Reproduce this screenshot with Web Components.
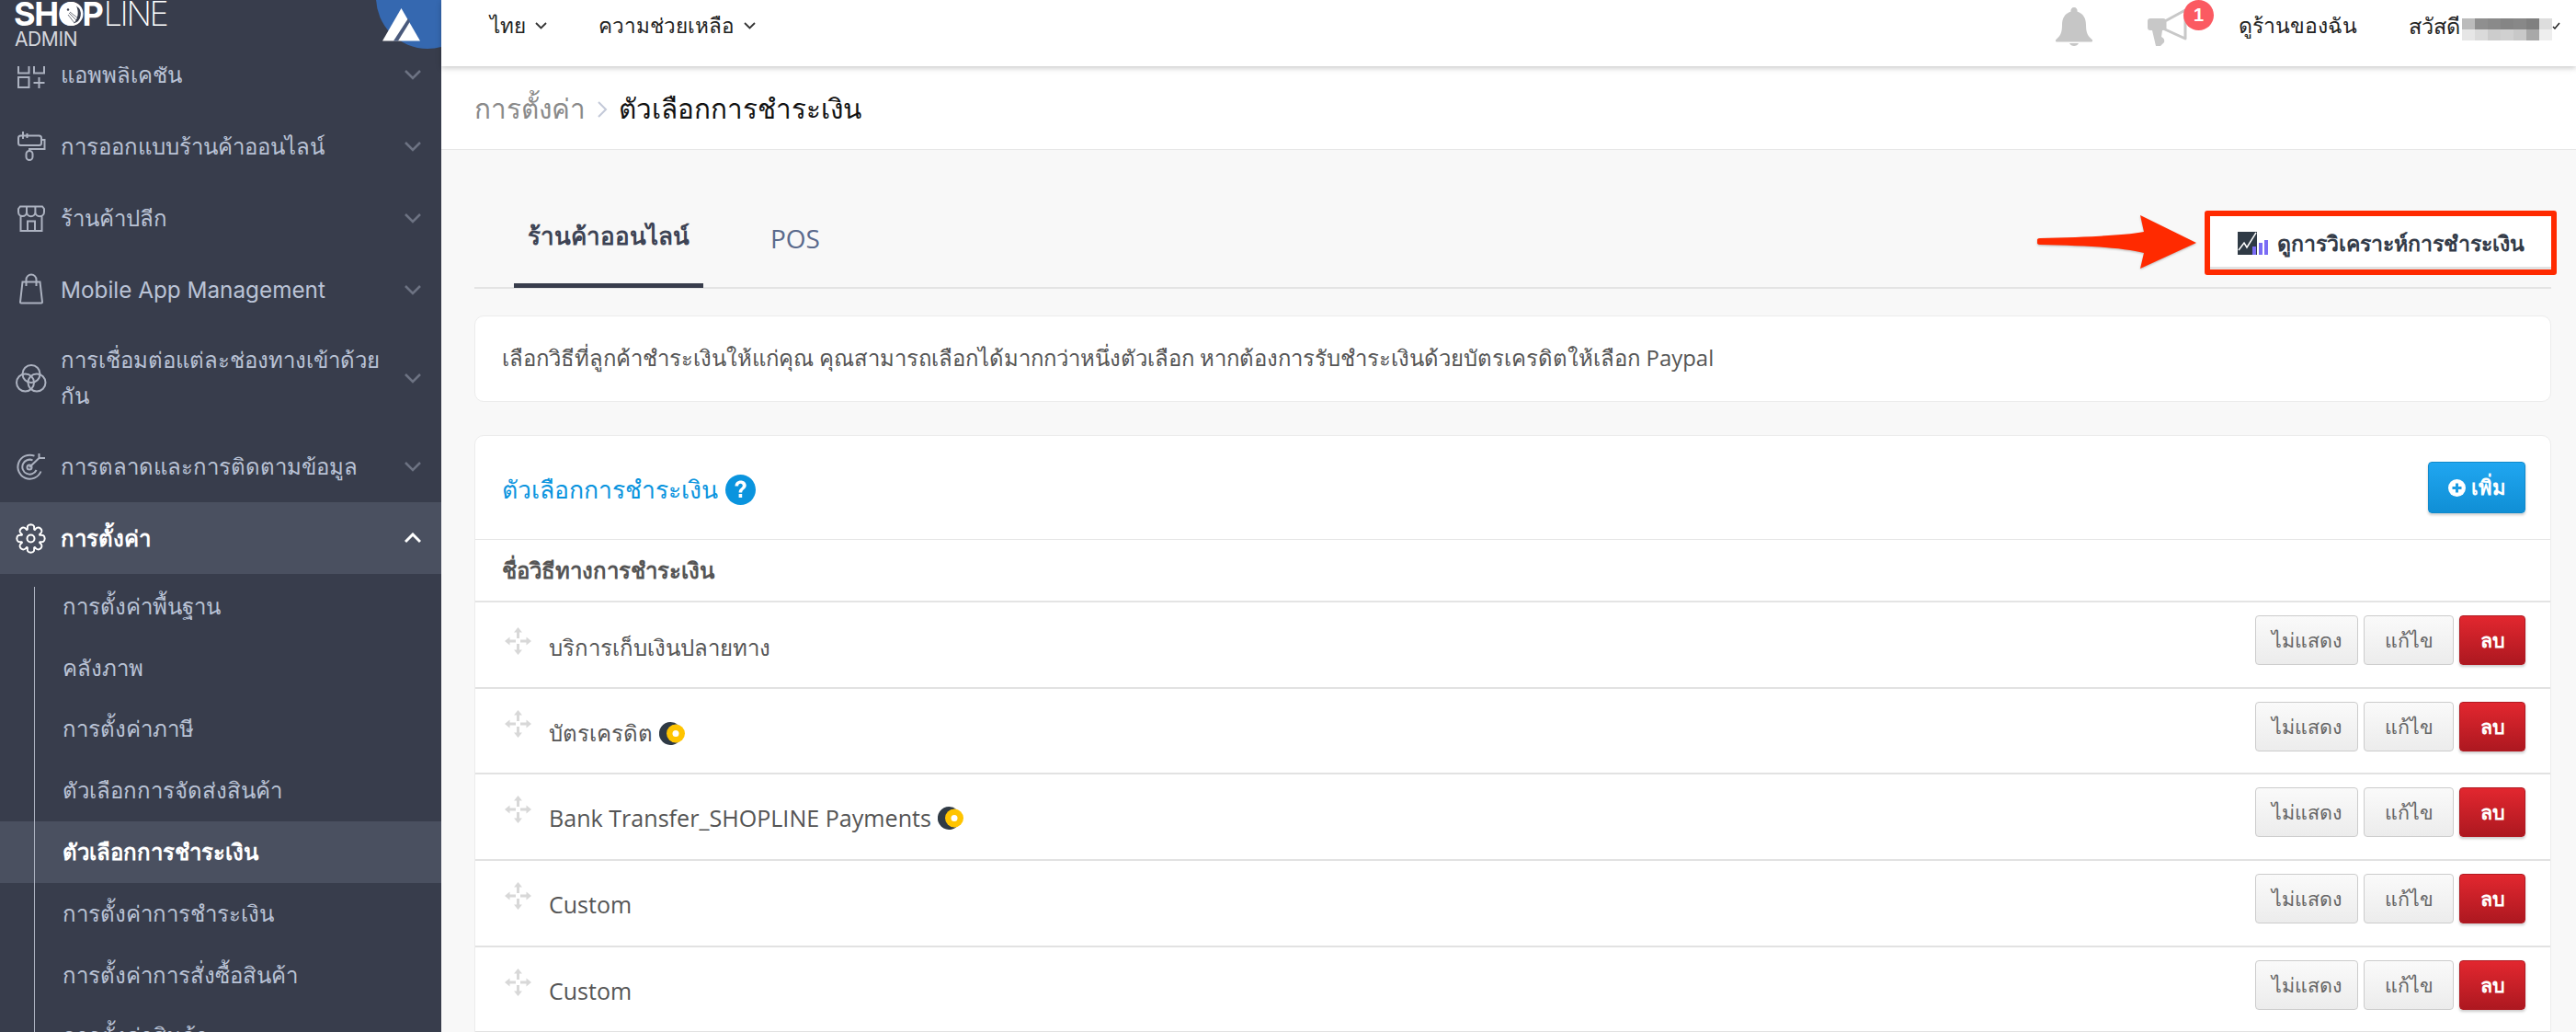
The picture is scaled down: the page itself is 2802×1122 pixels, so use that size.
<!DOCTYPE html>
<html lang="th">
<head>
<meta charset="utf-8">
<title>ตัวเลือกการชำระเงิน</title>
<style>
  html, body { margin: 0; padding: 0; height: 100%; overflow: hidden; background: #f8f8f8; }
  body { font-family: "Open Sans", "Noto Sans", sans-serif; }
</style>
</head>
<body>
<admin-app>
  <side-bar slot="side">
    <side-item icon="apps">แอพพลิเคชัน</side-item>
    <side-item icon="roller">การออกแบบร้านค้าออนไลน์</side-item>
    <side-item icon="store">ร้านค้าปลีก</side-item>
    <side-item icon="bag" style="font-size:24.300px">Mobile App Management</side-item>
    <side-item icon="rings" tall>การเชื่อมต่อแต่ละช่องทางเข้าด้วย<br>กัน</side-item>
    <side-item icon="target">การตลาดและการติดตามข้อมูล</side-item>
    <side-item icon="gear" open>การตั้งค่า</side-item>
    <side-sub>
      <sub-item>การตั้งค่าพื้นฐาน</sub-item>
      <sub-item>คลังภาพ</sub-item>
      <sub-item>การตั้งค่าภาษี</sub-item>
      <sub-item>ตัวเลือกการจัดส่งสินค้า</sub-item>
      <sub-item active>ตัวเลือกการชำระเงิน</sub-item>
      <sub-item>การตั้งค่าการชำระเงิน</sub-item>
      <sub-item>การตั้งค่าการสั่งซื้อสินค้า</sub-item>
      <sub-item>การตั้งค่าสินค้า</sub-item>
    </side-sub>
  </side-bar>
  <top-bar slot="top"></top-bar>
  <bread-crumb slot="top"></bread-crumb>
  <tab-bar></tab-bar>
  <info-card>เลือกวิธีที่ลูกค้าชำระเงินให้แก่คุณ คุณสามารถเลือกได้มากกว่าหนึ่งตัวเลือก หากต้องการรับชำระเงินด้วยบัตรเครดิตให้เลือก Paypal</info-card>
  <pay-card>
    <pay-row>บริการเก็บเงินปลายทาง</pay-row>
    <pay-row coin>บัตรเครดิต</pay-row>
    <pay-row coin latin style="font-size:25.100px">Bank Transfer_SHOPLINE Payments</pay-row>
    <pay-row latin style="font-size:25px">Custom</pay-row>
    <pay-row latin style="font-size:25px">Custom</pay-row>
  </pay-card>
</admin-app>

<script>
const THAI = '"Open Sans", "Noto Sans", sans-serif';

class AdminApp extends HTMLElement {
  constructor() {
    super();
    this.attachShadow({mode:'open'}).innerHTML = `
      <style>
        :host{ display:grid; grid-template-columns:480px 1fr; width:2802px; height:1122px; overflow:hidden; }
        .main{ display:flex; flex-direction:column; min-width:0; background:#f8f8f8; }
        .body{ padding:0 27px 0 36px; display:flex; flex-direction:column; }
      </style>
      <slot name="side"></slot>
      <div class="main">
        <slot name="top"></slot>
        <div class="body"><slot></slot></div>
      </div>`;
  }
}

class SideBar extends HTMLElement {
  constructor() {
    super();
    this.attachShadow({mode:'open'}).innerHTML = `
      <style>
        :host{ display:flex; flex-direction:column; height:1122px; overflow:hidden; background:#383d4c;
               font-family:Inter, "Noto Sans", sans-serif; position:relative; }
        .logo{ height:72px; flex:none; position:relative; overflow:hidden; background:#383d4c; z-index:1; }
        .name{ position:absolute; left:15px; top:1px; font:700 36px/28px Inter, sans-serif; color:#fff; letter-spacing:-1.200px; white-space:nowrap; }
        .name b{ font-weight:200; letter-spacing:-2.400px; margin-left:1px; }
        .bird{ position:absolute; left:0; top:0; }
        .admin{ position:absolute; left:16px; top:31px; font:400 21px/24px Inter, sans-serif; color:#d5d7dd; letter-spacing:-.4px; }
        .corner{ position:absolute; right:0; top:0; }
        .nav{ flex:1; overflow:hidden; }
        .scroll{ margin-top:-30px; display:block; }
      </style>
      <div class="logo">
        <div class="name">SHOP<b>LINE</b></div>
        <svg class="bird" width="120" height="32" viewBox="0 0 120 32">
          <circle cx="77.500" cy="15" r="13" fill="#fff"/>
          <path d="M83 6.500A10.500 10.500 0 0 1 80 25.500C85 21 86 12 83 6.500z" fill="#383d4c"/>
          <circle cx="74" cy="10.500" r="1.200" fill="#383d4c"/>
          <path d="M75 14l9 9M74 16l7 9M76 13l9 7" stroke="#383d4c" stroke-width=".7"/>
        </svg>
        <div class="admin">ADMIN</div>
        <svg class="corner" width="72" height="54" viewBox="0 0 72 54">
          <circle cx="57" cy="-3" r="56" fill="#3568b0"/>
          <path d="M8 44.500L28.500 9 49 44.500z" fill="#fff"/>
          <path d="M20 44.500L36 20l2 3.500-13 21z" fill="#4a5a7c"/>
        </svg>
      </div>
      <div class="nav"><div class="scroll"><slot></slot></div></div>`;
  }
}

// rounded eight-tooth gear around (33.5, 15.5)
function gearPath() {
  let d = '';
  const pt = (r, a) => (33.5 + r * Math.cos(a)).toFixed(2) + ' ' + (15.5 + r * Math.sin(a)).toFixed(2);
  for (let i = 0; i < 8; i++) {
    const a = i * Math.PI / 4 - Math.PI / 2;
    const s = Math.PI / 8;
    d += (i ? 'L' : 'M') + pt(10.5, a - s * .9);
    d += 'C' + pt(13, a - s * .75) + ' ' + pt(15.5, a - s * .7) + ' ' + pt(15.2, a);
    d += 'C' + pt(15.5, a + s * .7) + ' ' + pt(13, a + s * .75) + ' ' + pt(10.5, a + s * .9);
  }
  return d + 'Z';
}

const SIDE_ICONS = {
  apps: '<path d="M20 2v11.500h11.500V2M37 2v11.500h11V2M20 18h11.500v11H20zM42.500 18v12M36.500 24h12"/>',
  roller: '<rect x="20" y="3.500" width="25" height="10.500" rx="2.500"/><path d="M25-1V7M29.500 1V6M45 8h3.500v10H32v2"/><rect x="28.500" y="20" width="7" height="10" rx="3.500"/>',
  store: '<path d="M22 2.500H46L48 5V8.500A4.800 4.800 0 0 1 38.400 8.500A4.700 4.700 0 0 1 29 8.500A4.500 4.500 0 0 1 20 8.500V5zM29 2.500V8.500M38.400 2.500V8.500M22.500 13v16h23V13M30 29V18.500h8V29"/>',
  bag: '<path d="M24.500 6.500h19l2.500 22a1 1 0 0 1-1 1H23a1 1 0 0 1-1-1zM28.500 11V4a5.500 5.500 0 0 1 11 0v7"/>',
  rings: '<circle cx="34" cy="10.500" r="9.500"/><circle cx="27.500" cy="20" r="9.500"/><circle cx="40" cy="20" r="9.500"/>',
  target: '<path d="M37.500 3.700A13 13 0 1 0 44.500 20.500M35.500 8.300A8 8 0 1 0 39.600 19M32 16L42.500 6M42.500 1V6H49"/><circle cx="32" cy="16" r="2.500"/>',
  gear: '<path d="' + gearPath() + '" stroke-linejoin="round"/><circle cx="33.500" cy="15.500" r="4"/>'
};

class SideItem extends HTMLElement {
  constructor() {
    super();
    this.attachShadow({mode:'open'}).innerHTML = `
      <style>
        :host{ display:flex; align-items:center; min-height:78px; position:relative; color:#bac3d6; font-size:24px; line-height:39px; }
        :host([tall]){ padding:18px 0; }
        :host([open]){ background:#4a5060; color:#fff; font-weight:700; }
        .ico{ position:absolute; left:0; top:50%; margin-top:-15px; fill:none; stroke:#acb2c0; stroke-width:2; overflow:visible; }
        :host([open]) .ico{ stroke:#fff; }
        .txt{ margin-left:66px; width:370px; }
        .chev{ position:absolute; left:440px; top:50%; margin-top:-6px; fill:none; stroke:#6d7383; stroke-width:2.500; }
        :host([open]) .chev{ stroke:#fff; stroke-width:3; }
      </style>
      <svg class="ico" width="68" height="32" viewBox="0 0 68 32"></svg>
      <div class="txt"><slot></slot></div>
      <svg class="chev" width="18" height="12" viewBox="0 0 18 12"><path d=""/></svg>`;
  }
  connectedCallback() {
    this.shadowRoot.querySelector('.ico').innerHTML = SIDE_ICONS[this.getAttribute('icon')] || '';
    this.shadowRoot.querySelector('.chev path').setAttribute('d', this.hasAttribute('open') ? 'M1 10l8-8 8 8' : 'M1 2l8 8 8-8');
  }
}

class SideSub extends HTMLElement {
  constructor() {
    super();
    this.attachShadow({mode:'open'}).innerHTML = `
      <style>
        :host{ display:block; position:relative; padding-top:2px; }
        .rail{ position:absolute; left:37px; top:14px; bottom:0; width:1px; background:#aeb4c2; z-index:1; }
      </style>
      <div class="rail"></div><slot></slot>`;
  }
}

class SubItem extends HTMLElement {
  constructor() {
    super();
    this.attachShadow({mode:'open'}).innerHTML = `
      <style>
        :host{ display:flex; align-items:center; height:66.800px; padding-left:68px; color:#bac3d6; font-size:24px; }
        :host([active]){ background:#4a5060; color:#fff; font-weight:700; }
      </style>
      <slot></slot>`;
  }
}

class TopBar extends HTMLElement {
  constructor() {
    super();
    this.attachShadow({mode:'open'}).innerHTML = `
      <style>
        :host{ display:flex; align-items:center; height:72px; box-sizing:border-box; padding-bottom:16px; background:#fff; position:relative; z-index:2;
               box-shadow:0 2px 6px rgba(0,0,0,.22); font-family:${THAI}; font-size:22.500px; color:#222; }
        .lang{ display:flex; align-items:center; gap:10px; margin-left:53px; }
        .help{ display:flex; align-items:center; gap:10px; margin-left:56px; }
        .chev{ fill:none; stroke:#333; stroke-width:1.800; }
        .right{ margin-left:auto; display:flex; align-items:center; height:100%; }
        .bell{ margin-right:59px; margin-top:4px; }
        .mega{ position:relative; width:44px; height:44px; margin-right:56px; margin-top:4px; }
        .badge{ position:absolute; left:40px; top:-8px; width:33px; height:33px; border-radius:50%; background:#fb5a62;
                color:#fff; font:700 20px/33px "Liberation Sans", sans-serif; text-align:center; }
        .shop{ font-size:23px; }
        .hello{ margin-left:56px; display:flex; align-items:center; margin-right:17px; font-size:23.500px; }
        .blur{ width:98px; height:24px; margin-left:2px; margin-top:8px; display:grid; grid-template-columns:repeat(7,1fr); grid-template-rows:1fr 1fr; }
        .blur i:nth-child(1){background:#bbb}.blur i:nth-child(2){background:#8f8f8f}.blur i:nth-child(3){background:#8a8a8a}.blur i:nth-child(4){background:#858585}.blur i:nth-child(5){background:#888}.blur i:nth-child(6){background:#808080}.blur i:nth-child(7){background:#ddd}
        .blur i:nth-child(8){background:#e6e6e6}.blur i:nth-child(9){background:#dadada}.blur i:nth-child(10){background:#ccc}.blur i:nth-child(11){background:#d0d0d0}.blur i:nth-child(12){background:#c8c8c8}.blur i:nth-child(13){background:#a8a8a8}.blur i:nth-child(14){background:#eee}
      </style>
      <div class="lang">ไทย <svg class="chev" width="13" height="8" viewBox="0 0 13 8"><path d="M1 1l5.500 5.500L12 1"/></svg></div>
      <div class="help">ความช่วยเหลือ <svg class="chev" width="13" height="8" viewBox="0 0 13 8"><path d="M1 1l5.500 5.500L12 1"/></svg></div>
      <div class="right">
        <svg class="bell" width="40" height="44" viewBox="0 0 40 44" fill="#c6c6c6"><path d="M20 0a3.500 3.500 0 0 1 3.400 4.500C30 6.500 33 12 33 19c0 9 2 12 7 16.500a1.500 1.500 0 0 1-1 2H1a1.500 1.500 0 0 1-1-2C5 31 7 28 7 19c0-7 3-12.500 9.600-14.500A3.500 3.500 0 0 1 20 0z"/><path d="M15 39h10a5.500 5 0 0 1-10 0z"/></svg>
        <div class="mega">
          <svg width="44" height="44" viewBox="0 0 44 44"><rect x="1" y="12" width="20" height="13" rx="3" fill="#c8c8c8"/><path d="M20 15L42 3V34L20 24z" fill="#fff" stroke="#c8c8c8" stroke-width="3" stroke-linejoin="round"/><path d="M6 25h11l-1 7c2 1 4 3 3 6l-4 4h-5z" fill="#c8c8c8"/></svg>
          <div class="badge">1</div>
        </div>
        <span class="shop">ดูร้านของฉัน</span>
        <div class="hello">สวัสดี<div class="blur"><i></i><i></i><i></i><i></i><i></i><i></i><i></i><i></i><i></i><i></i><i></i><i></i><i></i><i></i></div>
          <svg width="9" height="8" viewBox="0 0 9 8" fill="none" stroke="#222" stroke-width="1.500"><path d="M1 5l2 2 5-6"/></svg>
        </div>
      </div>`;
  }
}

class BreadCrumb extends HTMLElement {
  constructor() {
    super();
    this.attachShadow({mode:'open'}).innerHTML = `
      <style>
        :host{ display:flex; align-items:center; height:91px; box-sizing:border-box; padding:3px 0 0 36px; background:#fff;
               border-bottom:1px solid #e6e6e6; font-family:${THAI}; font-size:29.700px; color:#111; }
        .up{ color:#8a8a8a; }
        svg{ margin:0 12.500px; fill:none; stroke:#c3c9d8; stroke-width:2; }
      </style>
      <span class="up">การตั้งค่า</span>
      <svg width="11" height="20" viewBox="0 0 11 20"><path d="M1 2l8 8-8 8"/></svg>
      <span>ตัวเลือกการชำระเงิน</span>`;
  }
}

class TabBar extends HTMLElement {
  constructor() {
    super();
    this.attachShadow({mode:'open'}).innerHTML = `
      <style>
        :host{ display:flex; height:151px; box-sizing:border-box; border-bottom:2px solid #e4e4e4; margin-bottom:29px;
               font-family:${THAI}; font-size:28px; position:relative; }
        .tab{ display:flex; align-items:center; justify-content:center; height:150px; box-sizing:border-box; padding-top:41px; position:relative; }
        .on{ margin-left:43px; width:206px; color:#3d4354; font-weight:700; font-size:26px; border-bottom:5px solid #383d4c; }
        .off{ margin-left:73px; color:#5a6a8c; }
        .report{ position:absolute; right:-6px; top:66px; width:383px; height:70px; box-sizing:border-box; border:6px solid #ff2a00;
                 border-radius:3px; background:#fff; box-shadow:inset 0 -3px 0 #e2e2e2; display:flex; align-items:center; gap:10px; padding-left:30px;
                 font-size:23.100px; font-weight:700; color:#333b48; }
        .arrow{ position:absolute; left:1700px; top:69px; filter:drop-shadow(0 1px 1px rgba(0,0,0,.25)); }
      </style>
      <div class="tab on">ร้านค้าออนไลน์</div>
      <div class="tab off">POS</div>
      <svg class="arrow" width="175" height="62" viewBox="0 0 175 62"><path d="M3 27 C50 26 95 24 116 20 L112 2 L173 32 L112 60 L116 43 C95 37 50 35 3 34 a3.500 3.500 0 0 1 0-7z" fill="#ff2a00"/></svg>
      <div class="report">
        <svg width="33" height="25" viewBox="0 0 33 25"><path d="M0 0h21v25H0z" fill="#2f3a45"/><path d="M1 20l6-8 3 5 10-16" fill="none" stroke="#fff" stroke-width="1.500"/><path d="M16 16h4v9h-4zM23 12h4v13h-4zM29 9h4v16h-4z" fill="#7a6cf5"/></svg>
        <span>ดูการวิเคราะห์การชำระเงิน</span>
      </div>`;
  }
}

class InfoCard extends HTMLElement {
  constructor() {
    super();
    this.attachShadow({mode:'open'}).innerHTML = `
      <style>
        :host{ display:flex; align-items:center; height:94px; box-sizing:border-box; padding-left:29px; background:#fff;
               border:1px solid #ececec; border-radius:10px; margin-bottom:36px; font-family:${THAI}; font-size:23.900px; color:#555; }
      </style>
      <slot></slot>`;
  }
}

class PayCard extends HTMLElement {
  constructor() {
    super();
    this.attachShadow({mode:'open'}).innerHTML = `
      <style>
        :host{ display:block; background:#fff; border:1px solid #ececec; border-radius:10px 10px 0 0; font-family:${THAI}; color:#555; }
        .head{ display:flex; align-items:center; height:113px; box-sizing:border-box; padding:0 27px 0 29px; border-bottom:1px solid #e6e6e6; }
        h2{ margin:5px 0 0; font-size:26.500px; font-weight:400; color:#0a94de; }
        .help{ margin:5px 0 0 8px; }
        .add{ margin-left:auto; width:106px; height:56px; box-sizing:border-box; border-radius:4px; border:1px solid #1089cb; color:#fff;
              background:linear-gradient(#20a6f0,#108fd5); box-shadow:0 2px 3px rgba(0,0,0,.2); display:flex; align-items:center; justify-content:center; gap:6px;
              font-size:22px; font-weight:700; }
        .col{ height:68px; box-sizing:border-box; padding-left:29px; display:flex; align-items:center; font-size:24px; font-weight:700; border-bottom:2px solid #e4e4e4; }
      </style>
      <div class="head">
        <h2>ตัวเลือกการชำระเงิน</h2>
        <svg class="help" width="33" height="33" viewBox="0 0 33 33"><circle cx="16.500" cy="16.500" r="16.500" fill="#0a94de"/><path d="M10.500 12.500c0-3.800 2.700-6 6.200-6s6 2.200 6 5.300c0 3.800-4.300 4-4.500 7.700h-3.600c0-4.800 4.200-5 4.200-7.500 0-1.200-.900-2.200-2.200-2.200-1.500 0-2.400 1-2.500 2.700z" fill="#fff"/><rect x="14.600" y="21" width="3.600" height="4" fill="#fff"/></svg>
        <div class="add">
          <svg width="19" height="19" viewBox="0 0 19 19"><circle cx="9.500" cy="9.500" r="9.500" fill="#fff"/><path d="M9.500 4.500v10M4.500 9.500h10" stroke="#1a9be3" stroke-width="3"/></svg>
          <span>เพิ่ม</span>
        </div>
      </div>
      <div class="col">ชื่อวิธีทางการชำระเงิน</div>
      <slot></slot>`;
  }
}

class PayRow extends HTMLElement {
  constructor() {
    super();
    this.attachShadow({mode:'open'}).innerHTML = `
      <style>
        :host{ display:flex; align-items:flex-start; height:93.700px; box-sizing:border-box; border-bottom:2px solid #e2e2e2; padding:14px 27px 0 32px;
               font-size:24px; color:#555; }
        .drag{ margin-top:9px; fill:#d8d8d8; }
        :host(:first-child) .drag{ margin-top:13px; }
        .name{ margin-left:19px; display:flex; align-items:center; gap:7px; height:62px; margin-top:4px; }
        :host([latin]) .name{ margin-top:2px; }
        .btns{ margin-left:auto; display:flex; gap:6px; }
        .btn{ height:54px; box-sizing:border-box; border:1px solid #ccc; border-radius:4px; display:flex; align-items:center; justify-content:center;
              background:linear-gradient(#fafafa,#ececec); font-size:21.500px; color:#666; }
        .hide{ width:112px; } .edit{ width:98px; }
        .del{ width:72px; border-color:#b11a22; color:#fff; font-weight:700; background:linear-gradient(#e2272f,#ad1820); box-shadow:0 2px 3px rgba(0,0,0,.2); }
        svg.coin{ display:none; }
        :host([coin]) svg.coin{ display:block; }
      </style>
      <svg class="drag" width="29" height="30" viewBox="0 0 29 30"><path d="M14.500 0l4.500 5.500h-3V12h-3V5.500H10zM14.500 30L10 24.500h3V18h3v6.500h3zM0 15l5.500-4.500v3H12v3H5.500v3zM29 15l-5.500 4.500v-3H17v-3h6.500v-3z"/></svg>
      <div class="name"><span><slot></slot></span>
        <svg class="coin" width="28" height="25" viewBox="0 0 28 25"><path d="M12.500 0a12.500 12.500 0 1 0 8 22c-6 1-11-3-11-9.500s5-10.500 11-9.500A12.500 12.500 0 0 0 12.500 0z" fill="#2f3a45"/><circle cx="18" cy="12.500" r="10" fill="#ffc400"/><circle cx="18" cy="12.500" r="3.500" fill="#fff"/></svg>
      </div>
      <div class="btns">
        <div class="btn hide">ไม่แสดง</div>
        <div class="btn edit">แก้ไข</div>
        <div class="btn del">ลบ</div>
      </div>`;
  }
}

customElements.define('admin-app', AdminApp);
customElements.define('side-bar', SideBar);
customElements.define('side-item', SideItem);
customElements.define('side-sub', SideSub);
customElements.define('sub-item', SubItem);
customElements.define('top-bar', TopBar);
customElements.define('bread-crumb', BreadCrumb);
customElements.define('tab-bar', TabBar);
customElements.define('info-card', InfoCard);
customElements.define('pay-card', PayCard);
customElements.define('pay-row', PayRow);
</script>
</body>
</html>
